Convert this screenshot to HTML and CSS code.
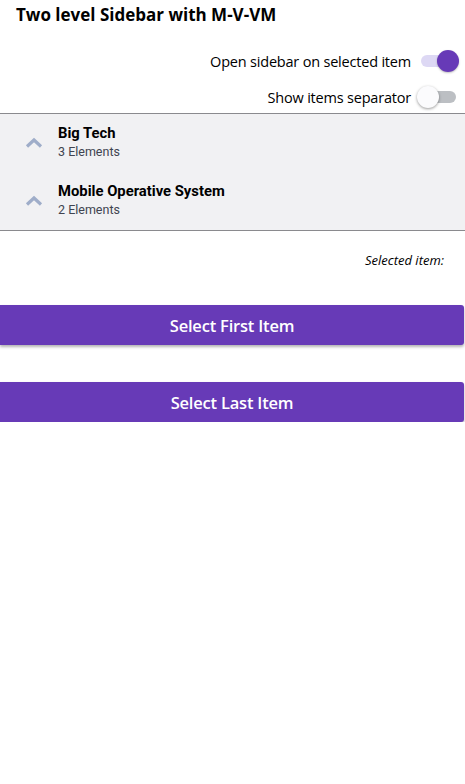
FILE: index.html
```html
<!DOCTYPE html>
<html>
<head>
<meta charset="utf-8">
<link rel="stylesheet" href="styles.css">
</head>
<body>
<div class="page">
  <h1 class="title">Two level Sidebar with M-V-VM</h1>
  <div class="options">
    <div class="opt">
      <span class="opt-label">Open sidebar on selected item</span>
      <span class="switch on"><span class="knob"></span></span>
    </div>
    <div class="opt">
      <span class="opt-label">Show items separator</span>
      <span class="switch off"><span class="knob"></span></span>
    </div>
  </div>
  <div class="sidebar">
    <div class="group">
      <svg class="chev" width="18" height="12" viewBox="0 0 18 12"><path d="M2 9.5 L9 3 L16 9.5" fill="none" stroke="#9fadc9" stroke-width="3.2"/></svg>
      <div class="gtext">
        <div class="gtitle">Big Tech</div>
        <div class="gsub">3 Elements</div>
      </div>
    </div>
    <div class="group">
      <svg class="chev" width="18" height="12" viewBox="0 0 18 12"><path d="M2 9.5 L9 3 L16 9.5" fill="none" stroke="#9fadc9" stroke-width="3.2"/></svg>
      <div class="gtext">
        <div class="gtitle">Mobile Operative System</div>
        <div class="gsub">2 Elements</div>
      </div>
    </div>
  </div>
  <div class="selected">Selected item:</div>
  <button class="btn first">Select First Item</button>
  <button class="btn last">Select Last Item</button>
</div>
</body>
</html>
```
FILE: styles.css
```css
html, body {
  margin: 0;
  padding: 0;
  background: #fff;
}
body {
  font-family: "Open Sans", "Noto Sans", sans-serif;
  color: #000;
}
.page {
  width: 465px;
}
.title {
  margin: 0;
  padding: 3px 0 0 16px;
  font-size: 17px;
  font-weight: 700;
  line-height: 24px;
}
.options {
  display: flex;
  flex-direction: column;
  align-items: flex-end;
  padding: 22px 9px 0 0;
}
.opt {
  display: flex;
  align-items: center;
  height: 24px;
}
.opt + .opt {
  margin-top: 12px;
}
.opt-label {
  font-size: 14.5px;
  letter-spacing: -0.2px;
  margin-right: 10px;
}
.switch {
  position: relative;
  width: 35px;
  height: 12px;
  border-radius: 6px;
  display: inline-block;
}
.switch.on {
  background: #ddd8f4;
}
.switch.off {
  background: #bcbfc3;
}
.knob {
  position: absolute;
  top: -5px;
  width: 22px;
  height: 22px;
  border-radius: 50%;
}
.switch.on .knob {
  left: 16px;
  background: #673ab7;
  box-shadow: 0 1px 2px rgba(0,0,0,0.25);
}
.switch.off .knob {
  left: -4px;
  background: #fbfbfd;
  box-shadow: 0 1px 3px rgba(0,0,0,0.4);
}
.sidebar {
  margin-top: 4px;
  background: #f1f1f3;
  border-top: 1px solid #8a8a8e;
  border-bottom: 1px solid #8a8a8e;
}
.group {
  display: flex;
  align-items: center;
  height: 58px;
  box-sizing: border-box;
  padding-bottom: 4px;
}
.chev {
  margin-left: 25px;
  margin-right: 15px;
  margin-top: 4px;
}
.gtext {
  font-family: Roboto, "Noto Sans", sans-serif;
}
.gtitle {
  font-size: 14.8px;
  font-weight: 700;
  line-height: 20px;
}
.gsub {
  font-size: 12.5px;
  color: #404450;
  line-height: 17px;
}
.selected {
  text-align: right;
  font-style: italic;
  font-size: 13px;
  padding: 20px 21px 0 0;
  line-height: 18px;
}
.btn {
  display: block;
  width: 464px;
  height: 40px;
  border: none;
  border-radius: 0 3px 3px 0;
  background: #673ab7;
  color: #fff;
  font-family: "Open Sans", "Noto Sans", sans-serif;
  font-size: 16.5px;
  font-weight: 600;
  padding: 0;
  box-shadow: 0 2px 3px rgba(0,0,0,0.3);
  letter-spacing: -0.2px;
}
.btn.first {
  margin-top: 36px;
}
.btn.last {
  margin-top: 37px;
}
```
